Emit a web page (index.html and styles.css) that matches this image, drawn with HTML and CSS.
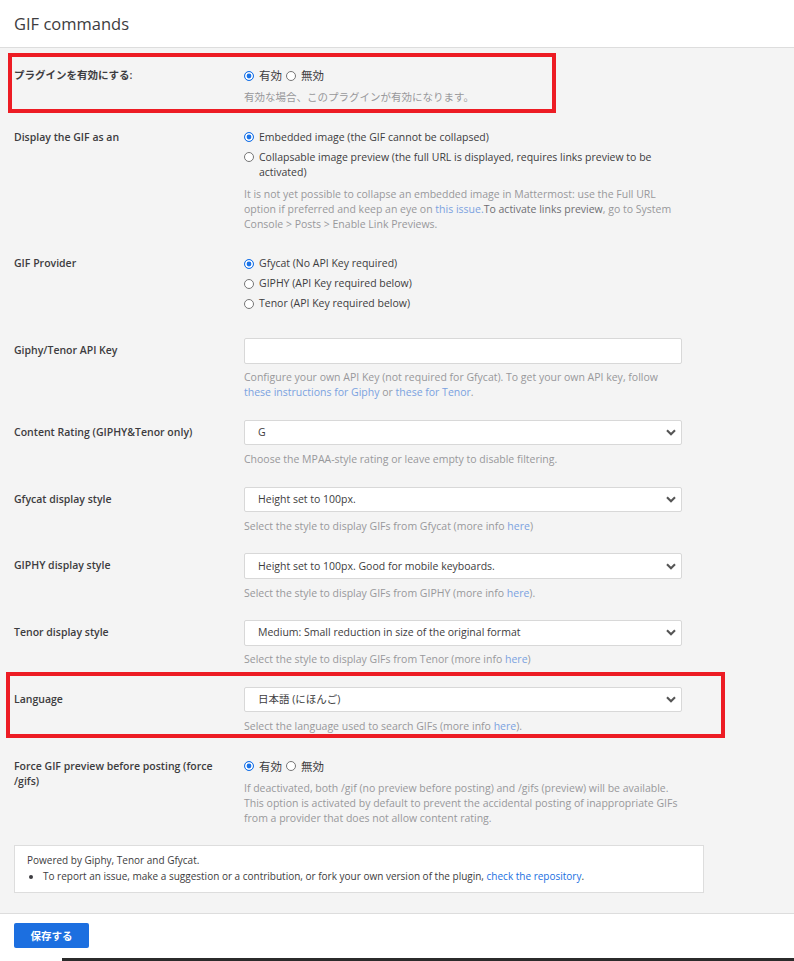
FILE: index.html
```html
<!DOCTYPE html>
<html lang="ja">
<head>
<meta charset="utf-8">
<title>GIF commands</title>
<link rel="stylesheet" href="styles.css">
</head>
<body>
<div class="page">
  <header class="topbar">
    <h1 class="title">GIF commands</h1>
  </header>

  <main class="settings">
    <div class="row radio-row highlight">
      <span class="mark mark-1"></span>
      <div class="label">プラグインを有効にする:</div>
      <div class="control">
        <div class="radios inline">
          <label class="opt"><span class="dot on"></span><span class="jp">有効</span></label>
          <label class="opt"><span class="dot"></span><span class="jp">無効</span></label>
        </div>
        <p class="help">有効な場合、このプラグインが有効になります。</p>
      </div>
    </div>

    <div class="row radio-row">
      <div class="label">Display the GIF as an</div>
      <div class="control">
        <div class="radios">
          <label class="opt"><span class="dot on"></span><span>Embedded image (the GIF cannot be collapsed)</span></label>
          <label class="opt"><span class="dot"></span><span>Collapsable image preview (the full URL is displayed, requires links preview to be activated)</span></label>
        </div>
        <p class="help">It is not yet possible to collapse an embedded image in Mattermost: use the Full URL option if preferred and keep an eye on <a class="hlink">this issue.</a><span class="strong">To activate links preview</span>, go to System Console &gt; Posts &gt; Enable Link Previews.</p>
      </div>
    </div>

    <div class="row radio-row no-help">
      <div class="label">GIF Provider</div>
      <div class="control">
        <div class="radios">
          <label class="opt"><span class="dot on"></span><span>Gfycat (No API Key required)</span></label>
          <label class="opt"><span class="dot"></span><span>GIPHY (API Key required below)</span></label>
          <label class="opt"><span class="dot"></span><span>Tenor (API Key required below)</span></label>
        </div>
      </div>
    </div>

    <div class="row field-row">
      <div class="label">Giphy/Tenor API Key</div>
      <div class="control">
        <div class="field"></div>
        <p class="help">Configure your own API Key (not required for Gfycat). To get your own API key, follow <a class="hlink">these instructions for Giphy</a> or <a class="hlink">these for Tenor</a>.</p>
      </div>
    </div>

    <div class="row field-row">
      <div class="label">Content Rating (GIPHY&amp;Tenor only)</div>
      <div class="control">
        <div class="field select"><span>G</span><svg class="chev" width="10" height="7" viewBox="0 0 10 7"><path d="M1 1.2 L5 5.2 L9 1.2" fill="none" stroke="#555" stroke-width="2.1"/></svg></div>
        <p class="help">Choose the MPAA-style rating or leave empty to disable filtering.</p>
      </div>
    </div>

    <div class="row field-row">
      <div class="label">Gfycat display style</div>
      <div class="control">
        <div class="field select"><span>Height set to 100px.</span><svg class="chev" width="10" height="7" viewBox="0 0 10 7"><path d="M1 1.2 L5 5.2 L9 1.2" fill="none" stroke="#555" stroke-width="2.1"/></svg></div>
        <p class="help">Select the style to display GIFs from Gfycat (more info <a class="hlink">here</a>)</p>
      </div>
    </div>

    <div class="row field-row">
      <div class="label">GIPHY display style</div>
      <div class="control">
        <div class="field select"><span>Height set to 100px. Good for mobile keyboards.</span><svg class="chev" width="10" height="7" viewBox="0 0 10 7"><path d="M1 1.2 L5 5.2 L9 1.2" fill="none" stroke="#555" stroke-width="2.1"/></svg></div>
        <p class="help">Select the style to display GIFs from GIPHY (more info <a class="hlink">here</a>).</p>
      </div>
    </div>

    <div class="row field-row">
      <div class="label">Tenor display style</div>
      <div class="control">
        <div class="field select"><span>Medium: Small reduction in size of the original format</span><svg class="chev" width="10" height="7" viewBox="0 0 10 7"><path d="M1 1.2 L5 5.2 L9 1.2" fill="none" stroke="#555" stroke-width="2.1"/></svg></div>
        <p class="help">Select the style to display GIFs from Tenor (more info <a class="hlink">here</a>)</p>
      </div>
    </div>

    <div class="row field-row highlight">
      <span class="mark mark-2"></span>
      <div class="label">Language</div>
      <div class="control">
        <div class="field select"><span>日本語 (にほんご)</span><svg class="chev" width="10" height="7" viewBox="0 0 10 7"><path d="M1 1.2 L5 5.2 L9 1.2" fill="none" stroke="#555" stroke-width="2.1"/></svg></div>
        <p class="help">Select the language used to search GIFs (more info <a class="hlink">here</a>).</p>
      </div>
    </div>

    <div class="row radio-row">
      <div class="label">Force GIF preview before posting (force /gifs)</div>
      <div class="control">
        <div class="radios inline">
          <label class="opt"><span class="dot on"></span><span class="jp">有効</span></label>
          <label class="opt"><span class="dot"></span><span class="jp">無効</span></label>
        </div>
        <p class="help">If deactivated, both /gif (no preview before posting) and /gifs (preview) will be available. This option is activated by default to prevent the accidental posting of inappropriate GIFs from a provider that does not allow content rating.</p>
      </div>
    </div>

    <div class="infobox">
      <p class="info-title">Powered by Giphy, Tenor and Gfycat.</p>
      <ul class="info-list">
        <li>To report an issue, make a suggestion or a contribution, or fork your own version of the plugin, <a class="blink">check the repository</a>.</li>
      </ul>
    </div>
  </main>

  <footer class="savebar">
    <button class="save" type="button">保存する</button>
  </footer>
  <div class="taskbar"></div>
</div>
</body>
</html>
```

FILE: styles.css
```css
html, body {
  margin: 0;
  padding: 0;
  background: #ffffff;
  overflow: hidden;
}

body {
  font-family: "Open Sans", "Noto Sans CJK JP", sans-serif;
  font-size: 10.5px;
  line-height: 15px;
  color: #3d3c40;
}

.page {
  width: 794px;
  height: 961px;
  display: flex;
  flex-direction: column;
}

.topbar {
  flex: none;
  height: 47px;
  border-bottom: 1px solid #dddddd;
  padding: 0 14px;
  display: flex;
  align-items: center;
}

.title {
  margin: 0;
  font-size: 16.5px;
  font-weight: 400;
  line-height: 20px;
  color: #3d3c40;
}

.settings {
  flex: none;
  background: #f4f4f4;
  padding: 15px 0 20px 14px;
}

.row {
  display: grid;
  grid-template-columns: 230px 438px;
  margin-bottom: 19.5px;
}

.radio-row {
  padding-top: 5px;
}

.radio-row.no-help {
  margin-bottom: 27px;
}

.highlight {
  position: relative;
}

.mark {
  position: absolute;
  border: 4px solid #ed1c24;
  box-sizing: border-box;
  pointer-events: none;
}

.mark-1 {
  left: -6px;
  top: -10px;
  width: 548px;
  height: 60px;
}

.mark-2 {
  left: -8px;
  top: -14.75px;
  width: 719px;
  height: 66px;
}

.label {
  font-weight: 600;
  padding-right: 14px;
}

.field-row .label {
  padding-top: 5px;
}

.radios {
  display: flex;
  flex-direction: column;
  gap: 5px;
}

.radios.inline {
  flex-direction: row;
  gap: 4px;
}

.opt {
  display: flex;
  align-items: flex-start;
  gap: 5px;
}

.jp {
  font-size: 11.5px;
}

.dot {
  flex: none;
  width: 10px;
  height: 10px;
  margin-top: 2.5px;
  border-radius: 50%;
  border: 1px solid #767676;
  background: #ffffff;
  box-sizing: border-box;
}

.dot.on {
  border-color: #1a73e8;
  background: #1a73e8;
  box-shadow: inset 0 0 0 1.6px #ffffff;
}

.help {
  margin: 7px 0 0;
  color: #98989b;
}

.field-row .help {
  margin-top: 6.75px;
}

.strong {
  color: #6e6e72;
}

.hlink {
  color: #7aa2e0;
  text-decoration: none;
}

.field {
  height: 25.5px;
  box-sizing: border-box;
  background: #ffffff;
  border: 1px solid #d8d8d8;
  border-radius: 2px;
}

.select {
  display: flex;
  align-items: center;
  justify-content: space-between;
  padding: 0 5px 0 13px;
  color: #3d3c40;
}

.chev {
  display: block;
}

.infobox {
  width: 690px;
  box-sizing: border-box;
  background: #ffffff;
  border: 1px solid #dddddd;
  padding: 6px 12px 8px;
  font-size: 10px;
  line-height: 16px;
}

.info-title {
  margin: 0;
}

.info-list {
  margin: 0;
  padding-left: 16px;
}

.blink {
  color: #1a6fdf;
  text-decoration: none;
}

.savebar {
  flex: none;
  border-top: 1px solid #dddddd;
  background: #ffffff;
  height: 45px;
  padding: 9px 14px 0;
  box-sizing: border-box;
}

.save {
  display: block;
  width: 75px;
  height: 25px;
  border: none;
  border-radius: 2px;
  background: #1c6fe0;
  color: #ffffff;
  font-family: "Open Sans", "Noto Sans CJK JP", sans-serif;
  font-size: 10.5px;
  font-weight: 600;
  padding: 0;
}

.taskbar {
  flex: none;
  height: 3px;
  margin-left: 62px;
  background: #2b2b2b;
}
```
